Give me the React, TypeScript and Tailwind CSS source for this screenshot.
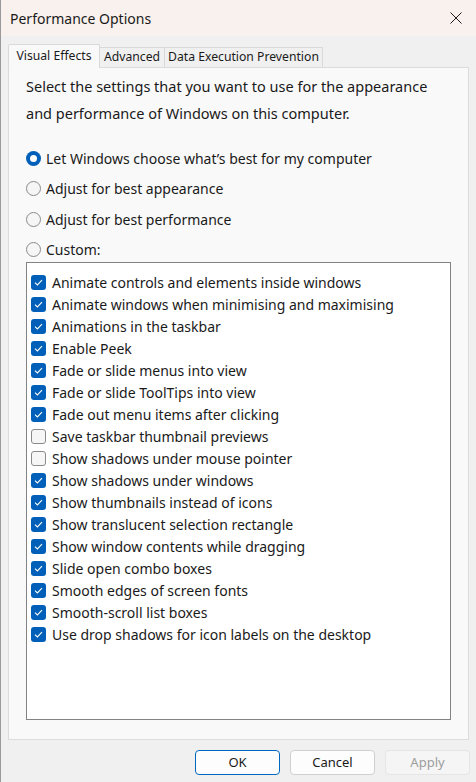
import React from 'react'

const items: [string, boolean][] = [
  ['Animate controls and elements inside windows', true],
  ['Animate windows when minimising and maximising', true],
  ['Animations in the taskbar', true],
  ['Enable Peek', true],
  ['Fade or slide menus into view', true],
  ['Fade or slide ToolTips into view', true],
  ['Fade out menu items after clicking', true],
  ['Save taskbar thumbnail previews', false],
  ['Show shadows under mouse pointer', false],
  ['Show shadows under windows', true],
  ['Show thumbnails instead of icons', true],
  ['Show translucent selection rectangle', true],
  ['Show window contents while dragging', true],
  ['Slide open combo boxes', true],
  ['Smooth edges of screen fonts', true],
  ['Smooth-scroll list boxes', true],
  ['Use drop shadows for icon labels on the desktop', true],
]

const radios = [
  'Let Windows choose what\u2019s best for my computer',
  'Adjust for best appearance',
  'Adjust for best performance',
  'Custom:',
]

function Radio({ on }: { on: boolean }) {
  if (on) {
    return (
      <span className="w-[15px] h-[15px] rounded-full bg-[#005fb8] flex items-center justify-center shrink-0">
        <span className="w-[7px] h-[7px] rounded-full bg-white" />
      </span>
    )
  }
  return <span className="w-[15px] h-[15px] rounded-full border border-[#8a8a8a] bg-[#f6f6f6] shrink-0" />
}

function Check({ on }: { on: boolean }) {
  if (!on) {
    return <span className="w-[15px] h-[15px] rounded-[3px] border border-[#8a8a8a] bg-[#f6f6f6] shrink-0" />
  }
  return (
    <span className="w-[15px] h-[15px] rounded-[3px] bg-[#005fb8] flex items-center justify-center shrink-0">
      <svg width="9" height="7" viewBox="0 0 9 7">
        <path d="M1 3.6 L3.4 6 L8 1.2" fill="none" stroke="white" strokeWidth="1.1" />
      </svg>
    </span>
  )
}

export default function App() {
  return (
    <div
      className="w-[476px] h-[782px] bg-[#f0f0f0] border-l border-[#9a9a9a] flex flex-col text-[#1a1a1a] overflow-hidden"
      style={{ fontFamily: '"Noto Sans", "Open Sans", sans-serif' }}
    >
      {/* Title bar */}
      <div className="h-[36px] bg-[#f9f1ed] flex items-center justify-between pl-[9px] pr-[14px] shrink-0">
        <span className="text-[14px] text-[#1a1a1a]">Performance Options</span>
        <svg width="12" height="12" viewBox="0 0 12 12">
          <path d="M0.5 0.5 L11.5 11.5 M11.5 0.5 L0.5 11.5" stroke="#1a1a1a" strokeWidth="1" />
        </svg>
      </div>

      {/* Tabs */}
      <div className="flex items-end pl-[7px] mt-[8px] h-[23px] shrink-0 text-[12.2px]">
        <div className="h-[24px] w-[92px] justify-center flex items-center bg-[#f9f9f9] border border-b-0 border-[#d9d9d9] rounded-t-[2px] relative z-10 -mb-px">
          Visual Effects
        </div>
        <div className="h-[20px] w-[65px] justify-center flex items-center border border-l-0 border-b-0 border-[#d9d9d9]">
          Advanced
        </div>
        <div className="h-[20px] w-[158px] justify-center flex items-center border border-l-0 border-b-0 border-[#d9d9d9]">
          Data Execution Prevention
        </div>
      </div>

      {/* Panel */}
      <div className="ml-[7px] w-[461px] h-[673px] bg-[#f9f9f9] border border-[#dcdcdc] px-[17px] pt-[5px] flex flex-col shrink-0">
        <p className="text-[14.5px] leading-[27px]">
          Select the settings that you want to use for the appearance
          <br />
          and performance of Windows on this computer.
        </p>

        <div className="mt-[21px] flex flex-col gap-[10.5px] text-[14px]">
          {radios.map((r, i) => (
            <label key={r} className="flex items-center gap-[5px] h-[20px]">
              <Radio on={i === 0} />
              <span>{r}</span>
            </label>
          ))}
        </div>

        <div className="mt-[2px] h-[458px] bg-white border border-[#838383] pt-[9px] pl-[4px] flex flex-col text-[14px]">
          {items.map(([label, on]) => (
            <div key={label} className="h-[22px] flex items-center gap-[6px]">
              <Check on={on} />
              <span>{label}</span>
            </div>
          ))}
        </div>
      </div>

      {/* Buttons */}
      <div className="flex justify-end gap-[10px] pr-[6px] mt-[10px] text-[13px]">
        <button className="w-[85px] h-[25px] rounded-[4px] border border-[#0067c0] bg-[#fdfdfd]">OK</button>
        <button className="w-[85px] h-[25px] rounded-[4px] border border-[#d0d0d0] bg-[#fdfdfd]">Cancel</button>
        <button className="w-[85px] h-[25px] rounded-[4px] border border-[#e5e5e5] bg-[#f5f5f5] text-[#9d9d9d]">Apply</button>
      </div>
    </div>
  )
}
